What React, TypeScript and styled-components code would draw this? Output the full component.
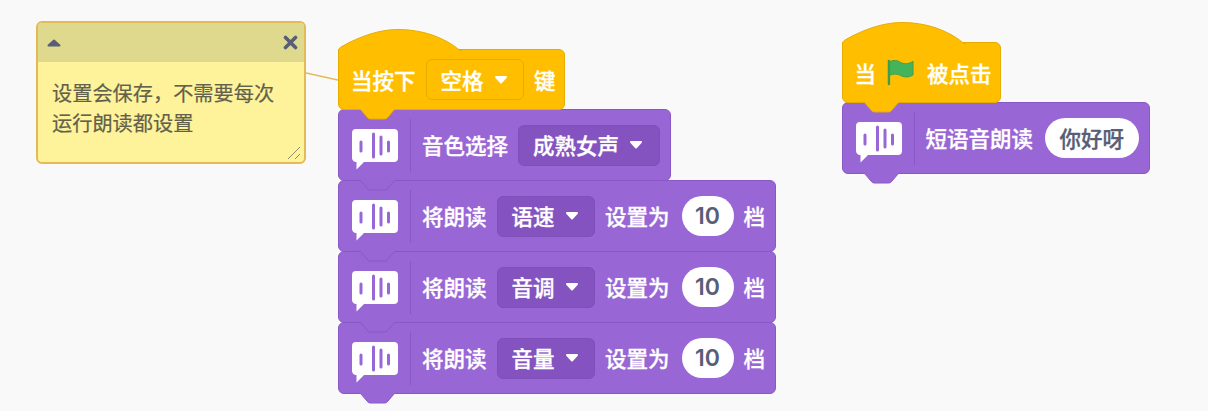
import React from 'react';
import styled, { createGlobalStyle } from 'styled-components';

const GlobalStyle = createGlobalStyle`
    html, body {
        margin: 0;
        padding: 0;
        background: #f9f9f9;
    }
    * {
        box-sizing: border-box;
    }
`;

const PURPLE = '#9966d6';
const PURPLE_LINE = '#8a58c6';
const YELLOW = '#ffbf00';
const YELLOW_LINE = '#e6ac00';

const Workspace = styled.div`
    width: 1208px;
    height: 411px;
    overflow: hidden;
    display: flex;
    align-items: flex-start;
    padding-left: 36px;
    font-family: 'Noto Sans CJK SC', 'Noto Sans', sans-serif;
    font-weight: 500;
    font-size: 21.5px;
    line-height: 30px;
    color: #fff;
    -webkit-text-stroke: 0.3px currentColor;
`;

const Note = styled.div`
    position: relative;
    flex: none;
    width: 270px;
    height: 143px;
    margin-top: 21px;
    background: #fef39a;
    border: 2px solid #e2bb56;
    border-radius: 6px;
`;

const NoteHeader = styled.div`
    height: 39px;
    background: #dfd98d;
    border-radius: 4px 4px 0 0;
    display: flex;
    align-items: center;
    justify-content: space-between;
    padding: 0 6px 0 9px;
`;

const NoteText = styled.p`
    margin: 16px 0 0;
    padding: 0 14px;
    font-size: 20.2px;
    font-weight: 400;
    line-height: 30px;
    color: #62614b;
    -webkit-text-stroke: 0.2px currentColor;
`;

const NoteLink = styled.svg`
    position: absolute;
    left: 100%;
    top: 48px;
`;

const Resize = styled.svg`
    position: absolute;
    right: 2px;
    bottom: 2px;
`;

const Stack = styled.div<{ $left: number; $top: number }>`
    position: relative;
    flex: none;
    display: flex;
    flex-direction: column;
    align-items: flex-start;
    margin-left: ${p => p.$left}px;
    margin-top: ${p => p.$top}px;
`;

const Block = styled.div<{ $hat?: boolean; $order: number }>`
    position: relative;
    z-index: ${p => p.$order};
    display: flex;
    align-items: center;
    gap: 10px;
    height: ${p => (p.$hat ? 61 : 72)}px;
    margin-top: ${p => (p.$hat ? 0 : -1)}px;
    padding: ${p => (p.$hat ? '0 8.5px 0 12px' : '0 10px 0 13px')};
    background: ${p => (p.$hat ? YELLOW : PURPLE)};
    border: 1px solid ${p => (p.$hat ? YELLOW_LINE : PURPLE_LINE)};
    border-radius: ${p => (p.$hat ? '0 6px 6px 6px' : '6px')};
`;

const Dome = styled.svg`
    position: absolute;
    left: -1px;
    bottom: 100%;
    margin-bottom: -2px;
`;

const Tab = styled.svg`
    position: absolute;
    left: 18px;
    top: 100%;
    margin-top: -1px;
    z-index: 1;
`;

const Divider = styled.span`
    flex: none;
    width: 1px;
    height: 53px;
    margin: 0 1px 0 2px;
    background: ${PURPLE_LINE};
`;

const Select = styled.span<{ $outlined?: boolean }>`
    flex: none;
    display: inline-flex;
    align-items: center;
    gap: 10px;
    height: 41px;
    padding: 0 15.5px 0 14px;
    border-radius: 6px;
    background: ${p => (p.$outlined ? YELLOW : '#8453bf')};
    border: 1px solid ${p => (p.$outlined ? YELLOW_LINE : '#7f4fba')};
`;

const Caret = styled.svg`
    flex: none;
`;

const Pill = styled.span<{ $number?: boolean }>`
    flex: none;
    display: inline-flex;
    align-items: center;
    justify-content: center;
    height: 40px;
    min-width: 52px;
    padding: 0 ${p => (p.$number ? 0 : 14.5)}px;
    margin-left: 2px;
    border-radius: 20px;
    background: #fff;
    color: #575e75;
    font-family: ${p => (p.$number ? "'Inter', sans-serif" : 'inherit')};
    font-size: ${p => (p.$number ? 23 : 21.5)}px;
    font-weight: ${p => (p.$number ? 600 : 500)};
    -webkit-text-stroke: ${p => (p.$number ? 0 : 0.3)}px currentColor;
`;

const Flag = styled.svg`
    flex: none;
    margin: 0 3px 0 1px;
`;

const Voice = styled.svg`
    flex: none;
    margin-top: 9px;
`;

function DropCaret() {
    return (
        <Caret width="14" height="8" viewBox="0 0 14 8">
            <path d="M2 1h10l-5 5.5z" fill="#fff" stroke="#fff" strokeWidth="2" strokeLinejoin="round" />
        </Caret>
    );
}

function VoiceIcon() {
    return (
        <Voice width="46" height="41" viewBox="0 0 46 41">
            <path
                d="M4 0h38a4 4 0 0 1 4 4v25a4 4 0 0 1-4 4H12l-7.5 7.5V33A4 4 0 0 1 0 29V4a4 4 0 0 1 4-4z"
                fill="#fff"
            />
            <path
                d="M9 13v9M21.5 5v23M29 8v17M36.5 13v9"
                stroke={PURPLE}
                strokeWidth="3"
                strokeLinecap="round"
                fill="none"
            />
        </Voice>
    );
}

function BottomTab({ fill, line }: { fill: string; line: string }) {
    return (
        <Tab width="41" height="12" viewBox="0 0 41 12">
            <path
                d="M0.5 0.5C2 0.5 3 1 4 2L10 9C11 10.5 12 11 13.5 11H27.5C29 11 30 10.5 31 9L37 2C38 1 39 0.5 40.5 0.5"
                fill={fill}
                stroke={line}
            />
            <rect x="1" y="0" width="39" height="1" fill={fill} />
        </Tab>
    );
}

function HatDome() {
    return (
        <Dome width="125" height="23" viewBox="0 0 125 23">
            <path d="M0.5 23V21C1 19.5 1.5 19 3 18C22 7 42 0.5 60 0.5C84 0.5 106 8 122 21.5H124V23Z" fill={YELLOW} />
            <path d="M0.5 23V21C1 19.5 1.5 19 3 18C22 7 42 0.5 60 0.5C84 0.5 106 8 122 21.5H124" fill="none" stroke={YELLOW_LINE} />
        </Dome>
    );
}

function VoiceBlock({ order, children }: { order: number; children: React.ReactNode }) {
    return (
        <Block $order={order}>
            <VoiceIcon />
            <Divider />
            {children}
            <BottomTab fill={PURPLE} line={PURPLE_LINE} />
        </Block>
    );
}

const settings = ['语速', '音调', '音量'];

export default function App() {
    return (
        <>
            <GlobalStyle />
            <Workspace>
                <Note>
                    <NoteHeader>
                        <svg width="14" height="8" viewBox="0 0 14 8">
                            <path d="M7 1.5L1.5 6.5h11z" fill="#575e75" stroke="#575e75" strokeWidth="2" strokeLinejoin="round" />
                        </svg>
                        <svg width="15" height="15" viewBox="0 0 15 15">
                            <path d="M2.5 2.5l10 10M12.5 2.5l-10 10" stroke="#575e75" strokeWidth="3.6" strokeLinecap="round" />
                        </svg>
                    </NoteHeader>
                    <NoteText>
                        设置会保存，不需要每次
                        <br />
                        运行朗读都设置
                    </NoteText>
                    <NoteLink width="36" height="12" viewBox="0 0 36 12">
                        <path d="M0 1.5L36 9.5" stroke="#e2bb56" strokeWidth="1.5" />
                    </NoteLink>
                    <Resize width="15" height="15" viewBox="0 0 15 15">
                        <path d="M1 14L13 2M8 14L13 9" stroke="#8f8c68" strokeWidth="1" />
                    </Resize>
                </Note>

                <Stack $left={32} $top={49}>
                    <Block $hat $order={6}>
                        <HatDome />
                        当按下
                        <Select $outlined>
                            空格
                            <DropCaret />
                        </Select>
                        键
                        <BottomTab fill={YELLOW} line={YELLOW_LINE} />
                    </Block>
                    <VoiceBlock order={5}>
                        音色选择
                        <Select>
                            成熟女声
                            <DropCaret />
                        </Select>
                    </VoiceBlock>
                    {settings.map((name, i) => (
                        <VoiceBlock key={name} order={4 - i}>
                            将朗读
                            <Select>
                                {name}
                                <DropCaret />
                            </Select>
                            设置为
                            <Pill $number>10</Pill>
                            档
                        </VoiceBlock>
                    ))}
                </Stack>

                <Stack $left={65.5} $top={42}>
                    <Block $hat $order={2}>
                        <HatDome />
                        当
                        <Flag width="27" height="27" viewBox="0 0 28 26">
                            <path d="M2.5 2C7 -0.5 11 0.5 14 2.5C18 4.5 22 4.5 27 1.5V15.5C22 18.5 18 18 14 16C11 14.5 7 14 2.5 16Z" fill="#45b35a" stroke="#3c9e4e" />
                            <path d="M2 1v24" stroke="#3c9e4e" strokeWidth="2.5" strokeLinecap="round" />
                        </Flag>
                        被点击
                        <BottomTab fill={YELLOW} line={YELLOW_LINE} />
                    </Block>
                    <VoiceBlock order={1}>
                        短语音朗读
                        <Pill>你好呀</Pill>
                    </VoiceBlock>
                </Stack>
            </Workspace>
        </>
    );
}
